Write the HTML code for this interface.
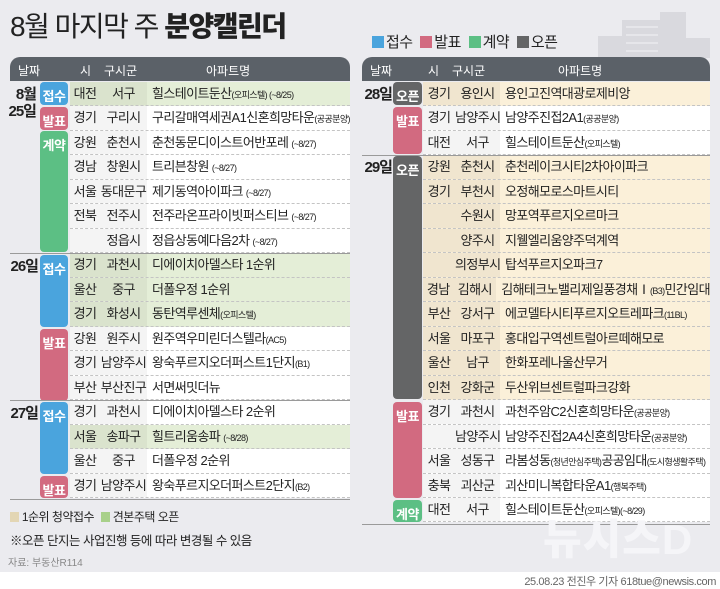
<!DOCTYPE html>
<html><head><meta charset="utf-8"><style>
*{margin:0;padding:0;box-sizing:border-box}
body{width:720px;height:589px;background:#ebebef;font-family:"Liberation Sans","Noto Sans CJK KR",sans-serif;color:#222;position:relative;overflow:hidden}
.abs{position:absolute}
.title{left:10px;top:5px;font-size:28px;letter-spacing:-1.5px;color:#222;white-space:nowrap}
.title b{font-weight:900}
.leg{top:31px;left:368px;font-size:15px;white-space:nowrap;letter-spacing:-0.5px}
.leg i{display:inline-block;width:12px;height:12px;vertical-align:-1px;margin:0 2px 0 4px}
.hd{height:24px;background:#5b6168;border-radius:10px 10px 0 0;color:#fff;font-size:12px}
.hd span{position:absolute;top:5px}
.rows{position:absolute}
.r{height:24.47px;display:flex;font-size:13px;letter-spacing:-0.6px;line-height:24px;border-bottom:1px dashed #c4c4c4;white-space:nowrap;overflow:hidden}
.r .s{text-align:center;background:rgba(0,0,0,.045)}
.r .g{text-align:center;background:rgba(0,0,0,.045)}
.r .a{padding-left:5px}
.r small{font-size:9px;letter-spacing:-0.6px}
.G{background:#e4eed7}.B{background:#fbf0d9}.W{background:#fff}
.bd{position:absolute;color:#fff;font-weight:bold;font-size:13px;text-align:center;border-radius:4px;padding-top:4px;letter-spacing:-0.5px}
.bl{background:#4aa4dd}.pk{background:#d26a80}.gr{background:#5cbf84}.dk{background:#646566}
.dt{position:absolute;font-size:15px;font-weight:bold;letter-spacing:-1px;line-height:17px;text-align:right}
.ln{position:absolute;height:1px;background:#9a9a9a}
</style></head><body>
<div class="abs title">8월 마지막 주 <b>분양캘린더</b></div>
<svg class="abs" style="left:598px;top:8px" width="112" height="50"><g fill="#d9d9de"><rect x="0" y="28" width="30" height="22"/><rect x="24" y="12" width="40" height="38"/><rect x="62" y="4" width="26" height="46"/><rect x="84" y="30" width="28" height="20"/></g><g fill="#e6e6ea"><rect x="28" y="18" width="32" height="2"/><rect x="28" y="26" width="32" height="2"/><rect x="28" y="34" width="32" height="2"/><rect x="28" y="42" width="32" height="2"/></g></svg>
<div class="abs leg"><i style="background:#4aa4dd"></i>접수 <i style="background:#d26a80"></i>발표 <i style="background:#5cbf84"></i>계약 <i style="background:#646566"></i>오픈</div>

<!-- LEFT -->
<div class="abs hd" style="left:10px;top:57px;width:340px"><span style="left:8px">날짜</span><span style="left:70px">시</span><span style="left:94px">구시군</span><span style="left:196px">아파트명</span></div>
<div class="rows" style="left:70px;top:82px;width:280px">
<div class="r G"><div class="s" style="width:30px">대전</div><div class="g" style="width:47px">서구</div><div class="a">힐스테이트둔산<small>(오피스텔) (~8/25)</small></div></div>
<div class="r W"><div class="s" style="width:30px">경기</div><div class="g" style="width:47px">구리시</div><div class="a">구리갈매역세권A1신혼희망타운<small>(공공분양)</small></div></div>
<div class="r W"><div class="s" style="width:30px">강원</div><div class="g" style="width:47px">춘천시</div><div class="a">춘천동문디이스트어반포레 <small>(~8/27)</small></div></div>
<div class="r W"><div class="s" style="width:30px">경남</div><div class="g" style="width:47px">창원시</div><div class="a">트리븐창원 <small>(~8/27)</small></div></div>
<div class="r W"><div class="s" style="width:30px">서울</div><div class="g" style="width:47px">동대문구</div><div class="a">제기동역아이파크 <small>(~8/27)</small></div></div>
<div class="r W"><div class="s" style="width:30px">전북</div><div class="g" style="width:47px">전주시</div><div class="a">전주라온프라이빗퍼스티브 <small>(~8/27)</small></div></div>
<div class="r W"><div class="s" style="width:30px"></div><div class="g" style="width:47px">정읍시</div><div class="a">정읍상동예다음2차 <small>(~8/27)</small></div></div>
<div class="r G"><div class="s" style="width:30px">경기</div><div class="g" style="width:47px">과천시</div><div class="a">디에이치아델스타 1순위</div></div>
<div class="r G"><div class="s" style="width:30px">울산</div><div class="g" style="width:47px">중구</div><div class="a">더폴우정 1순위</div></div>
<div class="r G"><div class="s" style="width:30px">경기</div><div class="g" style="width:47px">화성시</div><div class="a">동탄역루센체<small>(오피스텔)</small></div></div>
<div class="r W"><div class="s" style="width:30px">강원</div><div class="g" style="width:47px">원주시</div><div class="a">원주역우미린더스텔라<small>(AC5)</small></div></div>
<div class="r W"><div class="s" style="width:30px">경기</div><div class="g" style="width:47px">남양주시</div><div class="a">왕숙푸르지오더퍼스트1단지<small>(B1)</small></div></div>
<div class="r W"><div class="s" style="width:30px">부산</div><div class="g" style="width:47px">부산진구</div><div class="a">서면써밋더뉴</div></div>
<div class="r W"><div class="s" style="width:30px">경기</div><div class="g" style="width:47px">과천시</div><div class="a">디에이치아델스타 2순위</div></div>
<div class="r G"><div class="s" style="width:30px">서울</div><div class="g" style="width:47px">송파구</div><div class="a">힐트리움송파 <small>(~8/28)</small></div></div>
<div class="r W"><div class="s" style="width:30px">울산</div><div class="g" style="width:47px">중구</div><div class="a">더폴우정 2순위</div></div>
<div class="r W"><div class="s" style="width:30px">경기</div><div class="g" style="width:47px">남양주시</div><div class="a">왕숙푸르지오더퍼스트2단지<small>(B2)</small></div></div>
</div>
<div class="bd bl" style="left:40px;top:82px;width:28px;height:23px">접수</div>
<div class="bd pk" style="left:40px;top:107px;width:28px;height:23px">발표</div>
<div class="bd gr" style="left:40px;top:131px;width:28px;height:121px">계약</div>
<div class="bd bl" style="left:40px;top:255px;width:28px;height:72px">접수</div>
<div class="bd pk" style="left:40px;top:329px;width:28px;height:72px">발표</div>
<div class="bd bl" style="left:40px;top:402px;width:28px;height:72px">접수</div>
<div class="bd pk" style="left:40px;top:476px;width:28px;height:22px">발표</div>
<div class="dt" style="left:8px;top:86px;width:28px">8월<br>25일</div>
<div class="dt" style="left:6px;top:258px;width:32px">26일</div>
<div class="dt" style="left:6px;top:405px;width:32px">27일</div>
<div class="ln" style="left:10px;top:253px;width:340px"></div>
<div class="ln" style="left:10px;top:400px;width:340px"></div>
<div class="ln" style="left:10px;top:499px;width:340px"></div>

<!-- RIGHT -->
<div class="abs hd" style="left:362px;top:57px;width:348px"><span style="left:8px">날짜</span><span style="left:66px">시</span><span style="left:90px">구시군</span><span style="left:196px">아파트명</span></div>
<div class="rows" style="left:423px;top:82px;width:287px">
<div class="r B"><div class="s" style="width:32px">경기</div><div class="g" style="width:45px">용인시</div><div class="a">용인고진역대광로제비앙</div></div>
<div class="r W"><div class="s" style="width:32px">경기</div><div class="g" style="width:45px">남양주시</div><div class="a">남양주진접2A1<small>(공공분양)</small></div></div>
<div class="r W"><div class="s" style="width:32px">대전</div><div class="g" style="width:45px">서구</div><div class="a">힐스테이트둔산<small>(오피스텔)</small></div></div>
<div class="r B"><div class="s" style="width:32px">강원</div><div class="g" style="width:45px">춘천시</div><div class="a">춘천레이크시티2차아이파크</div></div>
<div class="r B"><div class="s" style="width:32px">경기</div><div class="g" style="width:45px">부천시</div><div class="a">오정해모로스마트시티</div></div>
<div class="r B"><div class="s" style="width:32px"></div><div class="g" style="width:45px">수원시</div><div class="a">망포역푸르지오르마크</div></div>
<div class="r B"><div class="s" style="width:32px"></div><div class="g" style="width:45px">양주시</div><div class="a">지웰엘리움양주덕계역</div></div>
<div class="r B"><div class="s" style="width:32px"></div><div class="g" style="width:45px">의정부시</div><div class="a">탑석푸르지오파크7</div></div>
<div class="r B"><div class="s" style="width:32px">경남</div><div class="g" style="width:45px">김해시</div><div class="a">김해테크노밸리제일풍경채Ⅰ<small>(B3)</small>민간임대</div></div>
<div class="r B"><div class="s" style="width:32px">부산</div><div class="g" style="width:45px">강서구</div><div class="a">에코델타시티푸르지오트레파크<small>(11BL)</small></div></div>
<div class="r B"><div class="s" style="width:32px">서울</div><div class="g" style="width:45px">마포구</div><div class="a">홍대입구역센트럴아르떼해모로</div></div>
<div class="r B"><div class="s" style="width:32px">울산</div><div class="g" style="width:45px">남구</div><div class="a">한화포레나울산무거</div></div>
<div class="r B"><div class="s" style="width:32px">인천</div><div class="g" style="width:45px">강화군</div><div class="a">두산위브센트럴파크강화</div></div>
<div class="r W"><div class="s" style="width:32px">경기</div><div class="g" style="width:45px">과천시</div><div class="a">과천주암C2신혼희망타운<small>(공공분양)</small></div></div>
<div class="r W"><div class="s" style="width:32px"></div><div class="g" style="width:45px">남양주시</div><div class="a">남양주진접2A4신혼희망타운<small>(공공분양)</small></div></div>
<div class="r W"><div class="s" style="width:32px">서울</div><div class="g" style="width:45px">성동구</div><div class="a">라봄성동<small>(청년안심주택)</small>공공임대<small>(도시형생활주택)</small></div></div>
<div class="r W"><div class="s" style="width:32px">충북</div><div class="g" style="width:45px">괴산군</div><div class="a">괴산미니복합타운A1<small>(행복주택)</small></div></div>
<div class="r W"><div class="s" style="width:32px">대전</div><div class="g" style="width:45px">서구</div><div class="a">힐스테이트둔산<small>(오피스텔)(~8/29)</small></div></div>
</div>
<div class="bd dk" style="left:393px;top:82px;width:29px;height:23px">오픈</div>
<div class="bd pk" style="left:393px;top:107px;width:29px;height:47px">발표</div>
<div class="bd dk" style="left:393px;top:156px;width:29px;height:243px">오픈</div>
<div class="bd pk" style="left:393px;top:402px;width:29px;height:96px">발표</div>
<div class="bd gr" style="left:393px;top:500px;width:29px;height:22px">계약</div>
<div class="dt" style="left:362px;top:86px;width:30px">28일</div>
<div class="dt" style="left:362px;top:159px;width:30px">29일</div>
<div class="ln" style="left:362px;top:155px;width:348px"></div>
<div class="ln" style="left:362px;top:524px;width:348px"></div>

<!-- legend bottom -->
<div class="abs" style="left:10px;top:508px;font-size:12px;letter-spacing:-0.5px;white-space:nowrap"><i style="display:inline-block;width:9px;height:10px;background:#e3d6b4;vertical-align:-1px"></i> 1순위 청약접수 <i style="display:inline-block;width:9px;height:10px;background:#a8d08a;vertical-align:-1px;margin-left:4px"></i> 견본주택 오픈</div>
<div class="abs" style="left:10px;top:530px;font-size:12.5px;letter-spacing:-0.5px;white-space:nowrap">※오픈 단지는 사업진행 등에 따라 변경될 수 있음</div>
<div class="abs" style="left:8px;top:554px;font-size:10px;color:#888;white-space:nowrap">자료: 부동산R114</div>
<div class="abs" style="left:543px;top:506px;font-size:42px;font-weight:900;color:#f5f5f8;letter-spacing:1px;white-space:nowrap">뉴시스D</div>
<div class="abs" style="left:0;top:572px;width:720px;height:17px;background:#fff"></div>
<div class="abs" style="right:4px;top:573px;font-size:11px;color:#666;letter-spacing:-0.4px;white-space:nowrap">25.08.23 전진우 기자 618tue@newsis.com</div>
</body></html>
